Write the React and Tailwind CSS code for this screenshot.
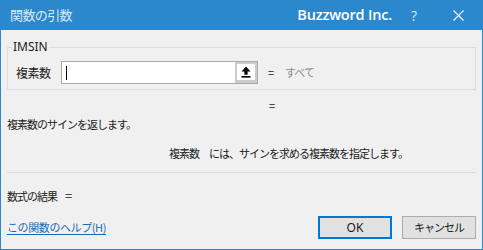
const jp = "font-['Noto_Sans_CJK_JP','Noto_Sans',sans-serif]";

const UploadArrow = () => (
  <svg width="10" height="12" viewBox="0 0 10 12">
    <polygon points="5,0.5 9.5,5.5 6.6,5.5 6.6,8.8 3.4,8.8 3.4,5.5 0.5,5.5" fill="#000" />
    <rect x="0.5" y="10" width="9" height="1.6" fill="#000" />
  </svg>
);

const CloseIcon = () => (
  <svg width="11" height="11" viewBox="0 0 11 11">
    <path d="M0.5 0.5 L10.5 10.5 M10.5 0.5 L0.5 10.5" stroke="#fff" strokeWidth="1.1" />
  </svg>
);

export default function App() {
  return (
    <div className={`w-[483px] h-[250px] bg-[#2b88cc] flex flex-col px-[1px] pb-[1px] ${jp}`}>
      {/* Title bar */}
      <div className="h-[30px] flex items-center text-white shrink-0">
        <span className="ml-[9px] text-[13px] tracking-[-0.6px] text-[#dcebf7]">関数の引数</span>
        <span className="ml-auto font-['Open_Sans',sans-serif] font-semibold text-[14.5px] tracking-[-0.2px]">
          Buzzword Inc.
        </span>
        <span className="ml-[19px] font-['Open_Sans',sans-serif] text-[14px] text-[#dcebf7]">?</span>
        <span className="ml-[36px] mr-[18px] flex items-center">
          <CloseIcon />
        </span>
      </div>

      {/* Body */}
      <div className="flex-1 bg-[#f0f0f0] px-[6px] flex flex-col text-[11px] tracking-[-1px] text-[#1a1a1a]">
        <fieldset className="mt-[10px] border border-[#dcdcdc] pl-[8px] pt-[7px] pb-[5px]">
          <legend className="ml-[-4px] px-[1px] text-[12px] leading-[14px] tracking-normal font-['Noto_Sans',sans-serif] text-[#222]">
            IMSIN
          </legend>
          <div className="flex items-center h-[23px]">
            <span className="w-[45px] text-[12px] tracking-[-0.5px]">複素数</span>
            <div className="w-[197px] h-[23px] border border-[#a9a9a9] bg-white flex">
              <div className="flex-1 flex items-center pl-[4px]">
                <div className="w-[1px] h-[14px] bg-black" />
              </div>
              <div className="w-[22px] h-full bg-[#cccccc] p-[2px] pb-[3px]">
                <div className="w-full h-full bg-white flex items-center justify-center">
                  <UploadArrow />
                </div>
              </div>
            </div>
            <span className="ml-[10px] tracking-normal">=</span>
            <span className="ml-[11px] text-[#8c8c8c]">すべて</span>
          </div>
        </fieldset>

        <div className="mt-[7px] h-[16px] leading-[16px] pl-[262px] tracking-normal">=</div>

        <div className="mt-[3px] h-[16px] leading-[16px]">複素数のサインを返します。</div>

        <div className="mt-[13px] h-[16px] leading-[16px] pl-[162px]">
          <span>複素数</span>
          <span className="ml-[10px]">には、サインを求める複素数を指定します。</span>
        </div>

        <div className="mt-[11px] h-[1px] bg-[#dadada]" />

        <div className="mt-[15px] h-[16px] leading-[16px] flex items-center">
          <span>数式の結果</span>
          <span className="ml-[8px] tracking-normal text-[13px]">=</span>
        </div>

        <div className="mt-[12px] flex items-center h-[23px]">
          <a className="text-[#1a68b8] tracking-[-0.4px] underline underline-offset-2 decoration-[#1a68b8]">この関数のヘルプ(H)</a>
          <button className="ml-auto w-[74px] h-[23px] border-2 border-[#0078d7] bg-[#e1e1e1] text-[12px] tracking-normal font-['Noto_Sans',sans-serif] flex items-center justify-center">
            OK
          </button>
          <button className="ml-[10px] w-[74px] h-[23px] border border-[#adadad] bg-[#e1e1e1] flex items-center justify-center">
            キャンセル
          </button>
        </div>
      </div>
    </div>
  );
}
